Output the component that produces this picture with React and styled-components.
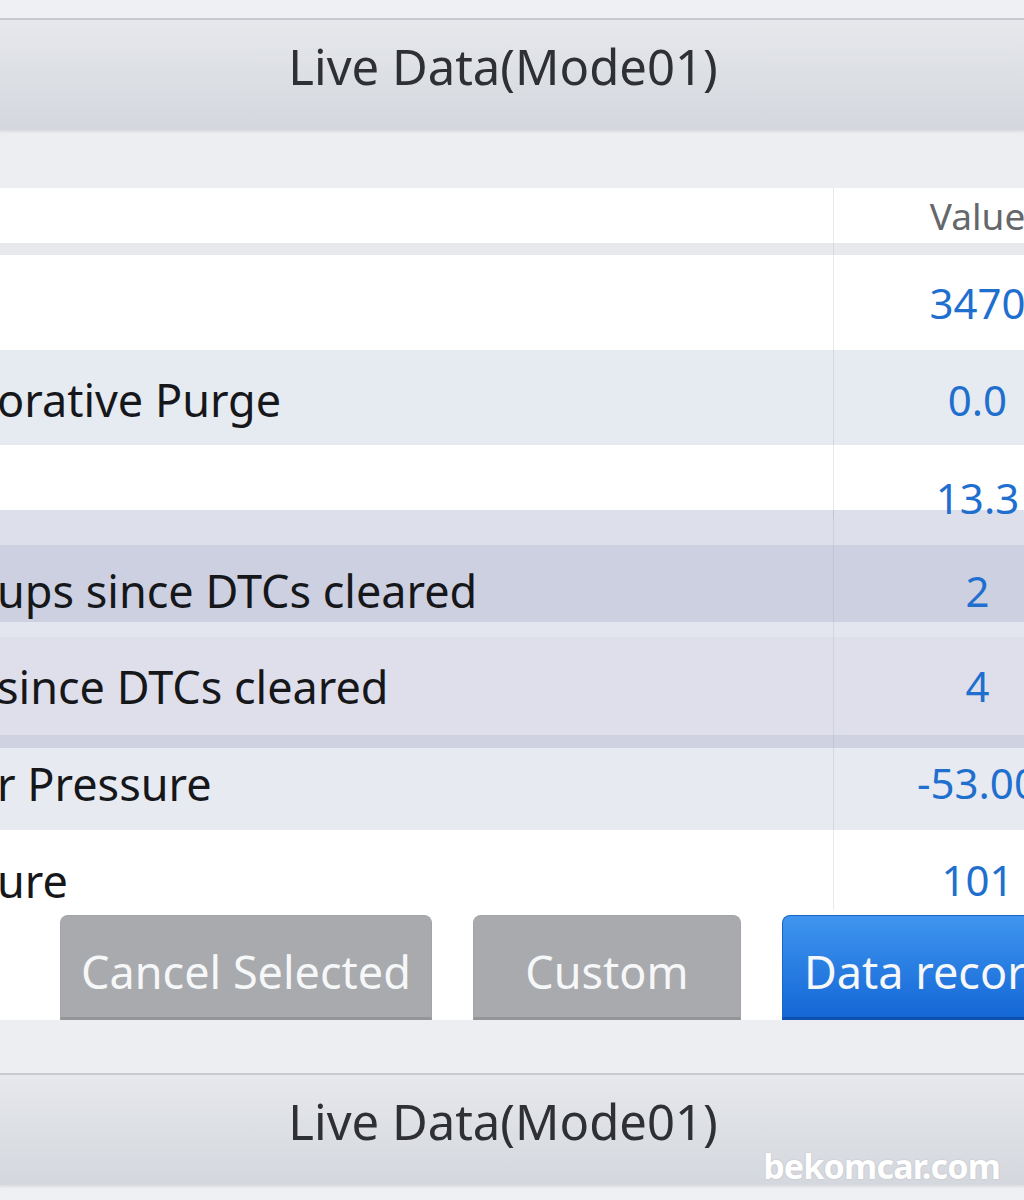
import React from "react";
import styled, { createGlobalStyle } from "styled-components";

const GlobalStyle = createGlobalStyle`
  html, body {
    margin: 0;
    padding: 0;
    background: #eef0f3;
    overflow: hidden;
  }
  body {
    font-family: "Noto Sans", "Open Sans", "Liberation Sans", sans-serif;
  }
`;

const rows = [
  { kind: "gap", h: 12, bg: "#e7e9ed" },
  { label: "", value: "3470", h: 95, bg: "#ffffff", dy: 0 },
  { label: "orative Purge", value: "0.0", h: 95, bg: "#e6eaf1", dy: 2 },
  { label: "", value: "13.3", h: 65, bg: "#ffffff", dy: 16 },
  { kind: "gap", h: 35, bg: "#dddfea" },
  { label: "ups since DTCs cleared", value: "2", h: 77, bg: "#cdd0e0", dy: 7 },
  { kind: "gap", h: 15, bg: "#e3e6ee" },
  { label: "since DTCs cleared", value: "4", h: 98, bg: "#dedfea", dy: 0 },
  { kind: "gap", h: 13, bg: "#cfd2e0" },
  { label: "r Pressure", value: "-53.00", h: 82, bg: "#e7eaf1", dy: -6 },
  { label: "ure", value: "101", h: 80, bg: "#ffffff", dy: 10 },
];

function App() {
  return (
    <Page>
      <GlobalStyle />
      <TopStrip />
      <TitleBar>
        <Title>Live Data(Mode01)</Title>
      </TitleBar>
      <Band h={58} />
      <Table>
        <Row h={55} bg="#ffffff">
          <NameCell />
          <ValueCell>
            <HeadText>Value</HeadText>
          </ValueCell>
        </Row>
        {rows.map((r, i) =>
          r.kind === "gap" ? (
            <Row key={i} h={r.h} bg={r.bg}>
              <NameCell />
              <ValueCell />
            </Row>
          ) : (
            <Row key={i} h={r.h} bg={r.bg}>
              <NameCell dy={r.dy}>
                <Label>{r.label}</Label>
              </NameCell>
              <ValueCell dy={r.dy}>
                <Value>{r.value}</Value>
              </ValueCell>
            </Row>
          )
        )}
      </Table>
      <ButtonBar>
        <ActionButton w={372}>Cancel Selected</ActionButton>
        <ActionButton w={268}>Custom</ActionButton>
        <ActionButton w={330} primary>
          Data record
        </ActionButton>
      </ButtonBar>
      <Band h={53} />
      <TitleBar>
        <Title>Live Data(Mode01)</Title>
        <Watermark>bekomcar.com</Watermark>
      </TitleBar>
    </Page>
  );
}

export default App;

const Page = styled.div`
  position: relative;
  width: 1024px;
  height: 1200px;
  overflow: hidden;
  background: #eef0f3;
`;

const TopStrip = styled.div`
  height: 18px;
  background: #eef0f3;
`;

const TitleBar = styled.div`
  position: relative;
  height: 112px;
  display: flex;
  align-items: center;
  justify-content: center;
  padding: 0 18px 18px 0;
  box-sizing: border-box;
  border-top: 2px solid #c6cacf;
  background: linear-gradient(#e6e8ec, #d4d7dd);
  box-shadow: 0 2px 2px rgba(0, 0, 0, 0.08);
`;

const Title = styled.div`
  font-size: 49px;
  color: #2e3033;
`;

const Band = styled.div`
  height: ${(p) => p.h}px;
  background: #eceef2;
`;

const Table = styled.div`
  width: 1121px;
`;

const Row = styled.div`
  display: grid;
  grid-template-columns: 833px 288px;
  height: ${(p) => p.h}px;
  background: ${(p) => p.bg};
`;

const Cell = styled.div`
  display: flex;
  align-items: center;
  box-sizing: border-box;
  white-space: nowrap;
  padding-top: ${(p) => Math.max(0, (p.dy || 0) * 2)}px;
  padding-bottom: ${(p) => Math.max(0, -(p.dy || 0) * 2)}px;
`;

const NameCell = styled(Cell)`
  overflow: visible;
`;

const ValueCell = styled(Cell)`
  justify-content: center;
  border-left: 1px solid rgba(150, 155, 165, 0.22);
`;

const Label = styled.span`
  font-size: 45px;
  line-height: 1;
  color: #16171a;
  margin-left: -3px;
`;

const Value = styled.span`
  font-size: 42px;
  line-height: 1;
  color: #1f6fcf;
`;

const HeadText = styled.span`
  font-size: 37px;
  line-height: 1;
  color: #65676b;
`;

const ButtonBar = styled.div`
  height: 110px;
  display: flex;
  align-items: flex-end;
  gap: 41px;
  padding-left: 60px;
  background: #ffffff;
`;

const ActionButton = styled.div`
  flex: none;
  width: ${(p) => p.w}px;
  height: 105px;
  box-sizing: border-box;
  display: flex;
  align-items: center;
  justify-content: ${(p) => (p.primary ? "flex-start" : "center")};
  padding: 10px 0 0 ${(p) => (p.primary ? "21px" : "0")};
  border-radius: 8px 8px 0 0;
  font-size: 45px;
  color: #f6f7f8;
  white-space: nowrap;
  background: ${(p) =>
    p.primary ? "linear-gradient(#3f95ef, #1467d6)" : "#a8aaad"};
  border: 1px solid ${(p) => (p.primary ? "#1a64c8" : "#a2a4a7")};
  border-bottom: 3px solid ${(p) => (p.primary ? "#0f4fae" : "#939598")};
`;

const Watermark = styled.div`
  position: absolute;
  right: 24px;
  bottom: -4px;
  font-size: 34px;
  font-weight: 700;
  color: #ffffff;
  letter-spacing: -0.8px;
  text-shadow: 0 0 2px rgba(0, 0, 0, 0.15);
`;
